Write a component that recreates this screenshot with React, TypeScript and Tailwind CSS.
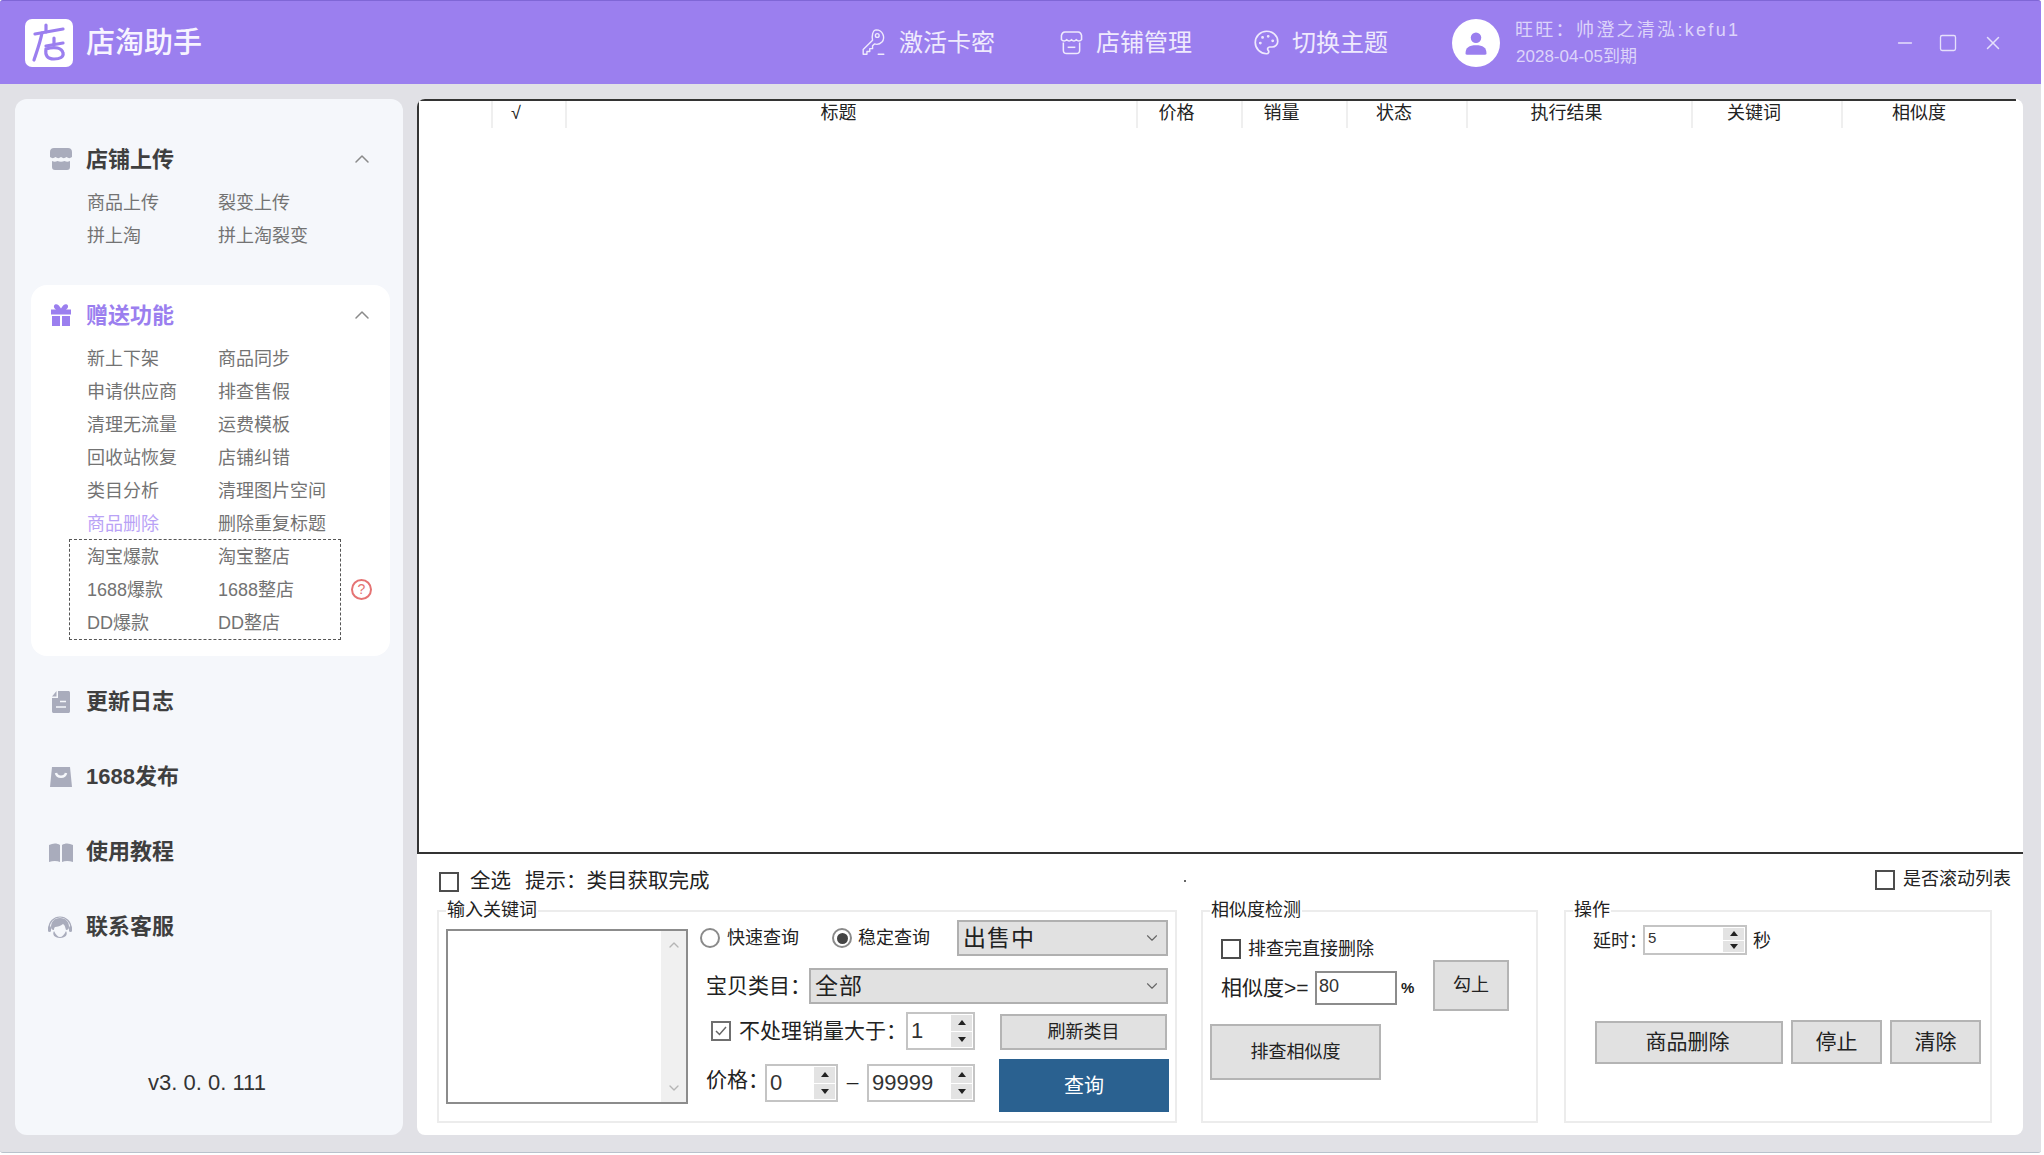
import { ChevronDown, ChevronUp, Minus, Palette, Square, X } from "lucide-react";
import type { ReactNode } from "react";

const COLUMNS = [
  { label: "", w: "w-[74px]" },
  { label: "√", w: "w-[74px]" },
  { label: "标题", w: "w-[571px]" },
  { label: "价格", w: "w-[105px]" },
  { label: "销量", w: "w-[105px]" },
  { label: "状态", w: "w-[120px]" },
  { label: "执行结果", w: "w-[225px]" },
  { label: "关键词", w: "w-[150px]" },
  { label: "相似度", w: "w-[178px]" },
];

const UPLOAD_ITEMS = ["商品上传", "裂变上传", "拼上淘", "拼上淘裂变"];
const GIFT_ITEMS = [
  "新上下架", "商品同步", "申请供应商", "排查售假", "清理无流量", "运费模板",
  "回收站恢复", "店铺纠错", "类目分析", "清理图片空间", "商品删除", "删除重复标题",
];
const BOXED_ITEMS = ["淘宝爆款", "淘宝整店", "1688爆款", "1688整店", "DD爆款", "DD整店"];

function ShopIcon() {
  return (
    <svg viewBox="0 0 24 24" className="w-[24px] h-[24px]" fill="#a9acbc">
      <path d="M5 1h14c2.500 0 4 1.500 4 4v5c-2 1.500-3.500 1.500-5.500 0-2 1.500-3.500 1.500-5.500 0-2 1.500-3.500 1.500-5.500 0-2 1.500-3.500 1.500-5.500 0V5c0-2.500 1.500-4 4-4z" />
      <path d="M3 14c2 1 3.500 1 5.500 0 2 1 5 1 7 0 2 1 3.500 1 5.500 0v6c0 2-1 3-3 3H6c-2 0-3-1-3-3z" />
    </svg>
  );
}

function GiftIcon() {
  return (
    <svg viewBox="0 0 24 24" className="w-[24px] h-[24px]" fill="#9b7fef">
      <path d="M6 1.500c2-1 4 .5 6 4 2-3.500 4-5 6-4 2 1.500 1 4-1 5h5v5H2v-5h5c-2-1-3-3.500-1-5z" />
      <path d="M3 13h8v10H3zM13 13h8v10h-8z" />
    </svg>
  );
}

function DocIcon() {
  return (
    <svg viewBox="0 0 24 24" className="w-[24px] h-[24px]">
      <path d="M9 1h10c1.500 0 2 .5 2 2v18c0 1.500-.5 2-2 2H5c-1.500 0-2-.5-2-2V8h6z" fill="#a9acbc" />
      <path d="M3 6.500 7.500 1v5.500z" fill="#a9acbc" />
      <path d="M11 11.500h6M7 17h10" stroke="#f5f7fb" strokeWidth="1.500" />
    </svg>
  );
}

function BagIcon() {
  return (
    <svg viewBox="0 0 24 24" className="w-[24px] h-[24px]">
      <path d="M3 2h18l2 20H1z" fill="#a9acbc" />
      <path d="M7 8c1 5 9 5 10 0" fill="none" stroke="#f5f7fb" strokeWidth="2.500" />
    </svg>
  );
}

function BookIcon() {
  return (
    <svg viewBox="0 0 24 24" className="w-[24px] h-[24px]" fill="#a9acbc">
      <path d="M0 5c4-2 8-2 11 0v17c-3-1.500-7-1.500-11 0z" />
      <path d="M13 5c3-2 7-2 11 0v17c-4-1.500-8-1.500-11 0z" />
    </svg>
  );
}

function ServiceIcon() {
  return (
    <svg viewBox="0 0 26 26" className="w-[26px] h-[26px] -ml-[2px]">
      <path d="M2 14a11 11 0 0 1 22 0" fill="none" stroke="#a9acbc" strokeWidth="1.200" />
      <path d="M13 4c6 0 9 4 9 9 0 2-1 3-3 3-1-3-1-5-3-6-2 2-6 3-8 3-1 1-1 2-1 3-2 0-3-1-3-3 0-5 3-9 9-9z" fill="#a9acbc" />
      <path d="M7 17c2 4 4 6 6 6s4-2 6-6c2 3 0 7-6 7s-8-4-6-7z" fill="#a9acbc" />
      <rect x="1" y="12" width="3" height="6" rx="1.500" fill="#a9acbc" />
      <rect x="22" y="12" width="3" height="6" rx="1.500" fill="#a9acbc" />
    </svg>
  );
}

function Logo() {
  return (
    <div className="w-[48px] h-[48px] rounded-[7px] bg-white flex items-center justify-center">
      <svg viewBox="0 0 48 48" className="w-[48px] h-[48px]" fill="none" stroke="#9b7fef" strokeWidth="3.200" strokeLinecap="round">
        <path d="M10 15 38 10" />
        <path d="M21 6v7" />
        <path d="M17 14C15 24 12 32 9 41" />
        <path d="M21 27 38 24" />
        <path d="M29 19v6" />
        <path d="M21 30c-1 6 1 10 8 10 6 0 10-2 9-6-1-5-8-7-17-4z" />
      </svg>
    </div>
  );
}

function KeyIcon() {
  return (
    <svg viewBox="0 0 26 32" className="w-[25px] h-[30px]" fill="none" stroke="#efeafd" strokeWidth="1.500" strokeLinecap="round" strokeLinejoin="round">
      <path d="M16 2a8 8 0 0 1 6 13c-2 2-5 3-8 2l-2 2v3H9v3H6v3H2v-5l10-10c-1-4 0-11 4-11z" />
      <circle cx="17" cy="8" r="2" />
      <path d="M18 28h6" />
    </svg>
  );
}

function StoreIcon() {
  return (
    <svg viewBox="0 0 24 26" className="w-[23px] h-[25px]" fill="none" stroke="#efeafd" strokeWidth="1.600" strokeLinejoin="round">
      <path d="M5 2h14c2 0 3 1.500 3.500 3.500V10c-1.500 2-4 2-5.500 0-1.500 2-3.500 2-5 0-1.500 2-3.500 2-5 0-1.500 2-4 2-5.500 0V5.500C2 3.500 3 2 5 2z" />
      <path d="M3.500 13v8c0 2 1.500 3.500 3.500 3.500h10c2 0 3.500-1.500 3.500-3.500v-8" />
      <path d="M8 18h8" />
    </svg>
  );
}

function ItemGrid({ items, active }: { items: string[]; active?: string }) {
  return (
    <div className="grid grid-cols-[131px_131px]">
      {items.map((t) => (
        <div key={t} className={`h-[33px] leading-[35px] text-[18px] whitespace-nowrap ${t === active ? "text-[#b9a2f6]" : "text-[#737373]"}`}>
          {t}
        </div>
      ))}
    </div>
  );
}

function SectionHead({ icon, title, color = "text-[#3f3f3f]" }: { icon: ReactNode; title: string; color?: string }) {
  return (
    <div className="flex items-center h-[28px] pl-[18px] pr-[16px]">
      <div className="w-[24px] h-[24px] mr-[13px] flex items-center">{icon}</div>
      <span className={`text-[22px] font-bold ${color}`}>{title}</span>
      <ChevronUp className="ml-auto w-[24px] h-[24px] text-[#8a8a8a]" strokeWidth={1.500} />
    </div>
  );
}

function LinkRow({ icon, title }: { icon: ReactNode; title: string }) {
  return (
    <div className="h-[75px] mx-[16px] pl-[18px] flex items-center">
      <div className="w-[24px] h-[24px] mr-[13px] flex items-center">{icon}</div>
      <span className="text-[22px] font-bold text-[#3f3f3f]">{title}</span>
    </div>
  );
}

function Sidebar() {
  return (
    <aside className="w-[388px] shrink-0 bg-[#f5f7fb] rounded-[12px] pt-[30px] flex flex-col">
      <section className="ml-[16px] mr-[13px] pt-[16px] pb-[17px] mb-[16px]">
        <SectionHead icon={<ShopIcon />} title="店铺上传" />
        <div className="mt-[13px] pl-[56px]">
          <ItemGrid items={UPLOAD_ITEMS} />
        </div>
      </section>
      <section className="ml-[16px] mr-[13px] pt-[16px] pb-[16px] bg-white rounded-[16px]">
        <SectionHead icon={<GiftIcon />} title="赠送功能" color="text-[#9b7fef]" />
        <div className="mt-[13px] pl-[56px]">
          <ItemGrid items={GIFT_ITEMS} active="商品删除" />
        </div>
        <div className="flex items-center ml-[38px] -mt-[1px]">
          <div className="w-[272px] h-[101px] border border-dashed border-[#555] pl-[17px]">
            <ItemGrid items={BOXED_ITEMS} />
          </div>
          <div className="ml-[10px] w-[21px] h-[21px] rounded-full border-2 border-[#e57373] text-[#e57373] text-[14px] leading-[17px] text-center">?</div>
        </div>
      </section>
      <div className="mt-[8px]">
        <LinkRow icon={<DocIcon />} title="更新日志" />
        <LinkRow icon={<BagIcon />} title="1688发布" />
        <LinkRow icon={<BookIcon />} title="使用教程" />
        <LinkRow icon={<ServiceIcon />} title="联系客服" />
      </div>
      <div className="mt-auto pb-[38px] pr-[4px] h-[66px] text-center text-[22px] leading-[28px] text-[#333]">v3. 0. 0. 111</div>
    </aside>
  );
}

function Header() {
  return (
    <header className="h-[84px] shrink-0 bg-[#9b7fef] border-t border-[#7f66d6] flex items-center pl-[25px] rounded-t-[3px]">
      <Logo />
      <span className="ml-[13px] mt-[2px] text-[29px] font-medium text-[#f7f4ff] whitespace-nowrap">店淘助手</span>
      <div className="ml-[659px] flex items-center text-[#efeafd] text-[24px] whitespace-nowrap">
        <KeyIcon />
        <span className="ml-[13px] mt-[1px]">激活卡密</span>
      </div>
      <div className="ml-[65px] flex items-center text-[#efeafd] text-[24px] whitespace-nowrap">
        <StoreIcon />
        <span className="ml-[13px] mt-[1px]">店铺管理</span>
      </div>
      <div className="ml-[61px] flex items-center text-[#efeafd] text-[24px] whitespace-nowrap">
        <Palette className="w-[27px] h-[27px]" strokeWidth={1.500} />
        <span className="ml-[12px] mt-[1px]">切换主题</span>
      </div>
      <div className="ml-[64px] w-[48px] h-[48px] rounded-full bg-white flex items-center justify-center">
        <svg viewBox="0 0 24 24" className="w-[28px] h-[28px]" fill="#9b7fef">
          <circle cx="12" cy="7.500" r="4.500" />
          <path d="M3 21c0-5 3-7 9-7s9 2 9 7c0 1-1 1-2 1H5c-1 0-2 0-2-1z" />
        </svg>
      </div>
      <div className="ml-[15px] w-[379px] flex flex-col text-[#ddd4fa] whitespace-nowrap">
        <span className="text-[18px] leading-[26px] tracking-[2.300px]">旺旺：帅澄之清泓:kefu1</span>
        <span className="text-[17px] leading-[24px] mt-[2px] pl-[1px]">2028-04-05到期</span>
      </div>
      <div className="flex items-center text-[#e6e0fb]">
        <Minus className="w-[22px] h-[22px]" strokeWidth={1.600} />
        <Square className="ml-[22px] w-[20px] h-[20px]" strokeWidth={1.600} />
        <X className="ml-[24px] w-[22px] h-[22px]" strokeWidth={1.600} />
      </div>
    </header>
  );
}

function Check({ checked }: { checked?: boolean }) {
  return (
    <span className={`w-[20px] h-[20px] shrink-0 border-2 bg-white flex items-center justify-center ${checked ? "border-[#6f6f6f]" : "border-[#4d4d4d]"}`}>
      {checked && (
        <svg viewBox="0 0 16 16" className="w-[16px] h-[16px]" fill="none" stroke="#666" strokeWidth="1.500">
          <path d="M3 8l3.500 3.500L13 4" />
        </svg>
      )}
    </span>
  );
}

function Radio({ checked }: { checked?: boolean }) {
  return (
    <span className="w-[20px] h-[20px] shrink-0 rounded-full border-2 border-[#8a8a8a] bg-white flex items-center justify-center">
      {checked && <span className="w-[11px] h-[11px] rounded-full bg-[#444]" />}
    </span>
  );
}

function Spin({ value, w, h = "h-[38px]", text = "text-[22px]" }: { value: string; w: string; h?: string; text?: string }) {
  return (
    <div className={`${w} ${h} shrink-0 border-2 border-[#c4c4c4] bg-white flex p-[1px]`}>
      <span className={`flex-1 pl-[2px] ${text} leading-[32px] text-[#333]`}>{value}</span>
      <div className="w-[21px] flex flex-col gap-[1px]">
        <span className="flex-1 bg-[#e3e3e3] flex items-center justify-center">
          <svg viewBox="0 0 8 5" className="w-[8px] h-[5px]" fill="#222"><path d="M4 0l4 5H0z" /></svg>
        </span>
        <span className="flex-1 bg-[#e3e3e3] flex items-center justify-center">
          <svg viewBox="0 0 8 5" className="w-[8px] h-[5px]" fill="#222"><path d="M4 5l4-5H0z" /></svg>
        </span>
      </div>
    </div>
  );
}

function Combo({ value, w }: { value: string; w: string }) {
  return (
    <div className={`${w} h-[36px] shrink-0 bg-[#e1e1e1] border-2 border-[#b0b0b0] flex items-center pl-[4px] pr-[5px]`}>
      <span className="text-[23px] text-[#222] tracking-[1px] whitespace-nowrap">{value}</span>
      <ChevronDown className="ml-auto w-[18px] h-[18px] text-[#666]" strokeWidth={1.500} />
    </div>
  );
}

function Btn({ children, cls }: { children: ReactNode; cls: string }) {
  return (
    <button className={`shrink-0 bg-[#e1e1e1] border-2 border-[#b4b4b4] text-[#222] flex items-center justify-center whitespace-nowrap ${cls}`}>
      {children}
    </button>
  );
}

function Group({ title, w, children }: { title: string; w: string; children: ReactNode }) {
  return (
    <div className={`relative ${w} h-[213px] shrink-0 border-2 border-[#ececec]`}>
      <span className="absolute -top-[14px] left-[7px] bg-white pl-[1px] pr-[1px] text-[18px] leading-[24px] text-[#222] whitespace-nowrap">{title}</span>
      {children}
    </div>
  );
}

function KeywordGroup() {
  return (
    <Group title="输入关键词" w="w-[740px]">
      <div className="flex items-start pl-[7px] pt-[8px]">
        <div className="mt-[9px] w-[242px] h-[175px] shrink-0 border-2 border-[#8c8c8c] bg-white flex justify-end">
          <div className="w-[25px] bg-[#f0f0f0] flex flex-col justify-between items-center py-[6px]">
            <ChevronUp className="w-[16px] h-[16px] text-[#b5b5b5]" strokeWidth={2} />
            <ChevronDown className="w-[16px] h-[16px] text-[#b5b5b5]" strokeWidth={2} />
          </div>
        </div>
        <div className="ml-[12px] w-[469px] flex flex-col text-[#222]">
          <div className="flex items-center h-[36px]">
            <Radio />
            <span className="ml-[7px] text-[18px]">快速查询</span>
            <span className="ml-[33px]"><Radio checked /></span>
            <span className="ml-[6px] text-[18px]">稳定查询</span>
            <span className="ml-auto mr-[1px]"><Combo value="出售中" w="w-[211px]" /></span>
          </div>
          <div className="flex items-center h-[36px] mt-[12px] pl-[6px]">
            <span className="w-[100px] text-[21px] whitespace-nowrap">宝贝类目：</span>
            <span className="ml-auto mr-[1px]"><Combo value="全部" w="w-[359px]" /></span>
          </div>
          <div className="flex items-center h-[38px] mt-[8px] pl-[11px]">
            <Check checked />
            <span className="ml-[8px] w-[156px] text-[21px] whitespace-nowrap">不处理销量大于：</span>
            <span className="ml-auto"><Spin value="1" w="w-[69px]" /></span>
            <Btn cls="ml-[25px] mr-[2px] mt-[2px] w-[167px] h-[36px] text-[18px]">刷新类目</Btn>
          </div>
          <div className="flex items-start h-[53px] mt-[9px] pl-[6px]">
            <span className="mt-[5px] w-[59px] text-[21px] whitespace-nowrap">价格：</span>
            <div className="mt-[5px]"><Spin value="0" w="w-[73px]" /></div>
            <span className="mt-[7px] w-[29px] text-center text-[21px]">–</span>
            <div className="mt-[5px]"><Spin value="99999" w="w-[108px]" /></div>
            <button className="ml-auto w-[170px] h-[53px] bg-[#2a6190] text-white text-[20px]">查询</button>
          </div>
        </div>
      </div>
    </Group>
  );
}

function SimilarGroup() {
  return (
    <Group title="相似度检测" w="w-[337px]">
      <div className="flex flex-col pt-[27px] text-[#222]">
        <div className="flex items-center pl-[18px] h-[20px]">
          <Check />
          <span className="ml-[7px] text-[18px] whitespace-nowrap">排查完直接删除</span>
        </div>
        <div className="flex items-center pl-[18px] h-[51px] mt-[1px]">
          <span className="text-[21px] whitespace-nowrap w-[94px] mt-[5px]">相似度&gt;=</span>
          <span className="mt-[5px] w-[82px] h-[34px] border-2 border-[#8c8c8c] pl-[2px] text-[18px] leading-[26px] text-[#333]">80</span>
          <span className="ml-[4px] w-[14px] mt-[5px] text-[15px] font-bold">%</span>
          <Btn cls="ml-[18px] w-[76px] h-[51px] text-[18px]">勾上</Btn>
        </div>
        <Btn cls="mt-[13px] ml-[7px] w-[171px] h-[56px] text-[18px]">排查相似度</Btn>
      </div>
    </Group>
  );
}

function ActionGroup() {
  return (
    <Group title="操作" w="w-[428px]">
      <div className="flex flex-col pt-[13px] text-[#222]">
        <div className="flex items-center pl-[27px]">
          <span className="w-[50px] mt-[2px] text-[18px] whitespace-nowrap">延时：</span>
          <Spin value="5" w="w-[104px]" h="h-[30px]" text="text-[15px] -mt-[6px]" />
          <span className="ml-[6px] mt-[2px] text-[18px]">秒</span>
        </div>
        <div className="flex items-center gap-[8px] pl-[29px] mt-[65px]">
          <Btn cls="w-[188px] h-[43px] pr-[3px] text-[21px]">商品删除</Btn>
          <Btn cls="w-[91px] h-[44px] text-[21px]">停止</Btn>
          <Btn cls="w-[91px] h-[44px] text-[21px]">清除</Btn>
        </div>
      </div>
    </Group>
  );
}

function Main() {
  return (
    <main className="relative w-[1606px] shrink-0 bg-white rounded-[8px] flex flex-col overflow-hidden">
      {/* Result table */}
      <div className="h-[755px] border-l-2 border-b-2 border-[#333] shrink-0">
        <div className="mr-[7px] h-[29px] border-t-2 border-[#333] flex">
          {COLUMNS.map((c, i) => (
            <div
              key={i}
              className={`${c.w} h-[27px] shrink-0 pr-[26px] text-center text-[18px] leading-[24px] text-[#222] ${i < COLUMNS.length - 1 ? "border-r-2 border-[#efefef]" : ""}`}
            >
              {c.label}
            </div>
          ))}
        </div>
      </div>

      {/* Bottom controls */}
      <div className="flex items-center justify-between pl-[22px] pr-[12px] pt-[17px] h-[38px] shrink-0">
        <div className="flex items-center text-[#222]">
          <Check />
          <span className="ml-[11px] text-[20.500px]">全选</span>
          <span className="ml-[14px] text-[20.500px] whitespace-nowrap">提示：类目获取完成</span>
        </div>
        <div className="flex items-center text-[#222] -mt-[4px]">
          <Check />
          <span className="ml-[8px] text-[18px] whitespace-nowrap">是否滚动列表</span>
        </div>
      </div>
      <div className="flex pl-[20px] mt-[18px]">
        <KeywordGroup />
        <div className="ml-[24px]"><SimilarGroup /></div>
        <div className="ml-[26px]"><ActionGroup /></div>
      </div>
      <span className="absolute left-[767px] top-[781px] w-[2px] h-[2px] bg-[#666]" />
    </main>
  );
}

export default function App() {
  return (
    <div className="w-[2044px] h-[1155px] bg-white font-['Liberation_Sans','Noto_Sans_CJK_SC',sans-serif]">
      <div className="w-[2041px] h-[1153px] bg-[#e1e1e6] border-b border-[#b9c2cc] flex flex-col rounded-[3px]">
        <Header />
        <div className="flex flex-1 min-h-0 gap-[14px] pl-[15px] pt-[15px] pb-[17px]">
          <Sidebar />
          <Main />
        </div>
      </div>
    </div>
  );
}
